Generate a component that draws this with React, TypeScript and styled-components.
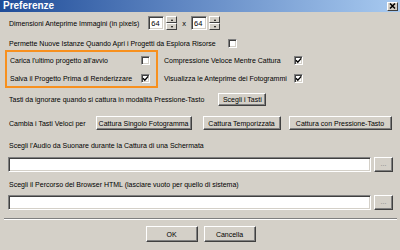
import React from "react";
import styled, { createGlobalStyle } from "styled-components";

const GlobalStyle = createGlobalStyle`
    html, body {
        margin: 0;
        padding: 0;
        background: #d4d0c8;
    }
    * {
        box-sizing: border-box;
    }
`;

const Window = styled.div`
    width: 400px;
    height: 250px;
    overflow: hidden;

    display: flex;
    flex-direction: column;

    background-color: #d4d0c8;
    font-family: "Liberation Sans", Arial, sans-serif;
    font-size: 7px;
    color: #000;
`;

const TitleBar = styled.div`
    height: 12px;
    padding: 0 2px 0 3px;

    display: flex;
    align-items: center;
    justify-content: space-between;

    background: linear-gradient(to right, #1f4c98, #5f86c2 45%, #a8caf0);
`;

const Title = styled.span`
    color: #fff;
    font-weight: bold;
    font-size: 10px;
    line-height: 12px;
`;

const CloseButton = styled.div`
    width: 11px;
    height: 9px;

    display: flex;
    align-items: center;
    justify-content: center;

    background: #d4d0c8;
    border-top: 1px solid #fff;
    border-left: 1px solid #fff;
    border-right: 1px solid #404040;
    border-bottom: 1px solid #404040;
`;

const Body = styled.div`
    flex: 1;
    padding: 0 7px 0 8px;

    display: flex;
    flex-direction: column;
`;

const Row = styled.div<{ $h: number; $mt: number; $gap?: number }>`
    height: ${p => p.$h}px;
    margin-top: ${p => p.$mt}px;

    display: flex;
    align-items: center;
    gap: ${p => p.$gap ?? 0}px;

    white-space: nowrap;
`;

const Label = styled.span<{ $ml?: number }>`
    margin-left: ${p => p.$ml ?? 1}px;
    line-height: 1;
`;

const Sunken = styled.div<{ $w?: number; $h: number }>`
    width: ${p => (p.$w ? `${p.$w}px` : "auto")};
    flex: ${p => (p.$w ? "none" : "1")};
    height: ${p => p.$h}px;

    display: flex;
    align-items: center;
    padding-left: 2px;

    background: #fff;
    border-top: 1px solid #808080;
    border-left: 1px solid #808080;
    border-right: 1px solid #fff;
    border-bottom: 1px solid #fff;
    box-shadow: inset 1px 1px 0 #404040, inset -1px -1px 0 #d4d0c8;
    font-size: 7.5px;
`;

const SpinGroup = styled.div<{ $ml?: number }>`
    margin-left: ${p => p.$ml ?? 0}px;

    display: flex;
    align-items: center;
    gap: 2px;
`;

const SpinButtons = styled.div`
    width: 11px;
    height: 14px;

    display: flex;
    flex-direction: column;
`;

const SpinHalf = styled.div<{ $up?: boolean }>`
    flex: 1;

    display: flex;
    align-items: center;
    justify-content: center;

    background: #d4d0c8;
    border-top: 1px solid #fff;
    border-left: 1px solid #fff;
    border-right: 1px solid #404040;
    border-bottom: 1px solid #404040;

    &::after {
        content: "";
        border-left: 1.5px solid transparent;
        border-right: 1.5px solid transparent;
        ${p => (p.$up ? "border-bottom: 2px solid #000;" : "border-top: 2px solid #000;")}
    }
`;

const Times = styled.span`
    margin: 0 3px 0 3px;
    font-size: 7.5px;
`;

const CheckBox = styled.div`
    width: 9px;
    height: 9px;
    flex: none;

    display: flex;
    align-items: center;
    justify-content: center;

    background: #fff;
    border-top: 1px solid #808080;
    border-left: 1px solid #808080;
    border-right: 1px solid #fff;
    border-bottom: 1px solid #fff;
    box-shadow: inset 1px 1px 0 #404040, inset -1px -1px 0 #d4d0c8;
`;

const OptionsGrid = styled.div`
    margin-top: 1px;
    margin-left: -3px;

    display: flex;
    gap: 5px;
`;

const Highlight = styled.div`
    width: 153px;
    height: 38px;
    padding: 2px 6px 1px 2px;

    display: flex;
    flex-direction: column;
    gap: 5px;

    border: 2px solid #f7901e;
`;

const OptionColumn = styled.div`
    width: 140px;
    padding-top: 4px;

    display: flex;
    flex-direction: column;
    gap: 5px;
`;

const OptionRow = styled.div`
    height: 13px;

    display: flex;
    align-items: center;
    justify-content: space-between;

    white-space: nowrap;
`;

const Button = styled.div<{ $w: number; $h?: number; $ml?: number }>`
    width: ${p => p.$w}px;
    height: ${p => p.$h ?? 14}px;
    margin-left: ${p => p.$ml ?? 0}px;
    flex: none;

    display: flex;
    align-items: center;
    justify-content: center;

    background: #d4d0c8;
    border-top: 1px solid #fff;
    border-left: 1px solid #fff;
    border-right: 1px solid #404040;
    border-bottom: 1px solid #404040;
    box-shadow: inset -1px -1px 0 #808080;

    white-space: nowrap;
    line-height: 1;
`;

const Dots = styled.span`
    color: #808080;
    font-size: 7px;
    margin-top: -2px;
`;

const Separator = styled.div`
    height: 2px;
    margin: 8px -4px 0 -4px;

    border-top: 1px solid #808080;
    border-bottom: 1px solid #fff;
`;

const Footer = styled.div`
    height: 16px;
    margin-top: 6px;

    display: flex;
    justify-content: center;
    gap: 6px;
`;

function Check() {
    return (
        <svg width="7" height="7" viewBox="0 0 7 7">
            <path d="M1 3.3 L2.8 5.2 L6.2 1.4" fill="none" stroke="#000" strokeWidth="1.4" />
        </svg>
    );
}

function CloseIcon() {
    return (
        <svg width="7" height="6" viewBox="0 0 7 6">
            <path d="M1 0.5 L6 5.5 M6 0.5 L1 5.5" stroke="#000" strokeWidth="1.5" />
        </svg>
    );
}

function Spinner({ value }: { value: string }) {
    return (
        <SpinGroup>
            <Sunken $w={16} $h={14}>{value}</Sunken>
            <SpinButtons>
                <SpinHalf $up />
                <SpinHalf />
            </SpinButtons>
        </SpinGroup>
    );
}

export default function App() {
    return (
        <>
            <GlobalStyle />
            <Window>
                <TitleBar>
                    <Title>Preferenze</Title>
                    <CloseButton>
                        <CloseIcon />
                    </CloseButton>
                </TitleBar>

                <Body>
                    <Row $h={14} $mt={4}>
                        <Label>Dimensioni Anteprime Immagini (in pixels)</Label>
                        <SpinGroup $ml={9}>
                            <Spinner value="64" />
                            <Times>x</Times>
                            <Spinner value="64" />
                        </SpinGroup>
                    </Row>

                    <Row $h={12} $mt={7} $gap={12}>
                        <Label>Permette Nuove Istanze Quando Apri i Progetti da Esplora Risorse</Label>
                        <CheckBox />
                    </Row>

                    <OptionsGrid>
                        <Highlight>
                            <OptionRow>
                                <Label>Carica l'ultimo progetto all'avvio</Label>
                                <CheckBox />
                            </OptionRow>
                            <OptionRow>
                                <Label>Salva il Progetto Prima di Renderizzare</Label>
                                <CheckBox>
                                    <Check />
                                </CheckBox>
                            </OptionRow>
                        </Highlight>
                        <OptionColumn>
                            <OptionRow>
                                <Label>Compressione Veloce Mentre Cattura</Label>
                                <CheckBox>
                                    <Check />
                                </CheckBox>
                            </OptionRow>
                            <OptionRow>
                                <Label>Visualizza le Anteprime dei Fotogrammi</Label>
                                <CheckBox>
                                    <Check />
                                </CheckBox>
                            </OptionRow>
                        </OptionColumn>
                    </OptionsGrid>

                    <Row $h={14} $mt={4} $gap={14}>
                        <Label>Tasti da ignorare quando si cattura in modalità Pressione-Tasto</Label>
                        <Button $w={48} $h={13}>Scegli i Tasti</Button>
                    </Row>

                    <Row $h={14} $mt={10}>
                        <Label>Cambia i Tasti Veloci per</Label>
                        <Button $w={96} $ml={10}>Cattura Singolo Fotogramma</Button>
                        <Button $w={78} $ml={11}>Cattura Temporizzata</Button>
                        <Button $w={103} $ml={8}>Cattura con Pressione-Tasto</Button>
                    </Row>

                    <Row $h={12} $mt={9}>
                        <Label>Scegli l'Audio da Suonare durante la Cattura di una Schermata</Label>
                    </Row>

                    <Row $h={15} $mt={6} $gap={3}>
                        <Sunken $h={15} />
                        <Button $w={19} $h={15}>
                            <Dots>...</Dots>
                        </Button>
                    </Row>

                    <Row $h={12} $mt={6}>
                        <Label>Scegli il Percorso del Browser HTML (lasciare vuoto per quello di sistema)</Label>
                    </Row>

                    <Row $h={15} $mt={5} $gap={3}>
                        <Sunken $h={15} />
                        <Button $w={19} $h={15}>
                            <Dots>...</Dots>
                        </Button>
                    </Row>

                    <Separator />

                    <Footer>
                        <Button $w={52} $h={16}>OK</Button>
                        <Button $w={52} $h={16}>Cancella</Button>
                    </Footer>
                </Body>
            </Window>
        </>
    );
}
